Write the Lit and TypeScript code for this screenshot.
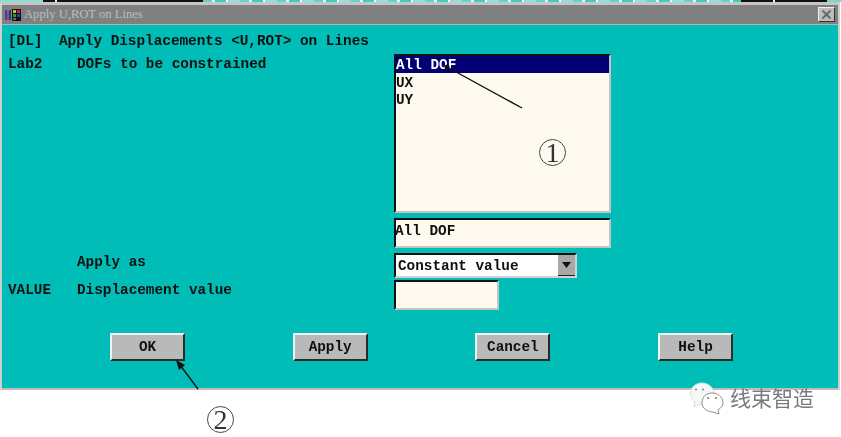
import { LitElement, html, css } from "lit";
import { customElement } from "lit/decorators.js";

@customElement("app-root")
export class AppRoot extends LitElement {
  static styles = css`
    :host {
      display: block;
      position: relative;
      width: 841px;
      height: 437px;
      background: #fff;
      overflow: hidden;
      font-family: "Liberation Mono", monospace;
      font-weight: 700;
      font-size: 14.35px;
      color: #101010;
    }
    .strip { display: flex; height: 2px; }
    .s-teal { width: 43px; background: #8fdcd4; }
    .s-black { background: #111; }
    .s-white { width: 2px; background: #eee; }
    .s-b1 { width: 12px; }
    .s-b2 { width: 146px; }
    .s-b3 { width: 32px; }
    .s-b4 { width: 52px; }
    .s-noise {
      width: 538px;
      background: repeating-linear-gradient(90deg, #5fd6c8 0 9px, #e6f6f2 9px 12px, #3fcdbf 12px 23px, #fff 23px 25px, #8fe2d8 25px 37px);
    }
    .s-end { flex: 1; background: #7cd8cf; }

    .dialog {
      margin: 0 3px 0 2px;
      height: 388px;
      box-sizing: border-box;
      background: #00bdb8;
      border-top: 3px solid #c6c6c6;
      border-bottom: 2px solid #bdbdbd;
      box-shadow: -2px 0 0 #cfcfcf, 2px 0 0 #cfcfcf;
      display: flex;
      flex-direction: column;
      filter: blur(0.3px);
    }
    .title {
      height: 20px;
      margin-bottom: 1px;
      background: #808080;
      border-bottom: 1px solid #b4b4b4;
      box-sizing: border-box;
      display: flex;
      align-items: center;
      padding: 0 3px 0 3px;
      gap: 2px;
      color: #bdbdbd;
      font-family: "Liberation Serif", serif;
      font-weight: 400;
      font-size: 12.6px;
    }
    .title-text { flex: 1; }
    .close {
      width: 17px;
      height: 15px;
      box-sizing: border-box;
      background: #bdbdbd;
      border: 1px solid;
      border-color: #eee #333 #333 #eee;
      display: flex;
    }
    .close svg { width: 100%; height: 100%; }

    .form {
      display: grid;
      grid-template-columns: 69px 317px 1fr;
      padding: 0 0 0 6px;
    }
    .heading {
      grid-column: 1 / -1;
      height: 28px;
      display: grid;
      grid-template-columns: 51px 1fr;
      align-items: center;
      padding-top: 1px;
      box-sizing: border-box;
    }
    .lab { padding-top: 1px; line-height: 19px; }
    .right { display: flex; flex-direction: column; align-items: flex-start; }

    .listbox {
      width: 217px;
      height: 159px;
      box-sizing: border-box;
      background: #fffaf0;
      border: 2px solid;
      border-color: #111 #c4c4c4 #c4c4c4 #111;
    }
    .opt { height: 18px; line-height: 20px; margin-top: -1px; }
    .opt.sel { height: 17px; line-height: 19px; margin: 0 0 1px; background: #000073; color: #fff; }
    .entry {
      width: 217px;
      height: 30px;
      margin-top: 5px;
      box-sizing: border-box;
      background: #fffaf0;
      border: 2px solid;
      border-color: #111 #c4c4c4 #c4c4c4 #111;
      padding: 2px 0 0 0;
      line-height: 18px;
      text-indent: -1px;
    }
    .select {
      width: 183px;
      height: 25px;
      margin-top: 5px;
      box-sizing: border-box;
      background: #fff;
      border: 2px solid;
      border-color: #111 #d2d2d2 #d2d2d2 #111;
      display: flex;
      align-items: center;
      padding-left: 2px;
    }
    .select span { flex: 1; }
    .arrow {
      width: 17px;
      height: 21px;
      background: #a8a8a8;
      border-bottom: 1px solid #222;
      display: flex;
      align-items: center;
      justify-content: center;
      box-sizing: border-box;
    }
    .arrow svg { width: 9px; height: 6px; }
    .value {
      width: 105px;
      height: 30px;
      margin-top: 2px;
      box-sizing: border-box;
      background: #fffaf0;
      border: 2px solid;
      border-color: #111 #c4c4c4 #c4c4c4 #111;
    }
    .apply-label { line-height: 16px; padding-top: 6px; }
    .value-label { line-height: 16px; padding-top: 4px; }
    .buttons {
      display: flex;
      gap: 107.7px;
      padding: 23px 0 0 108px;
    }
    .btn {
      width: 75px;
      height: 28px;
      box-sizing: border-box;
      background: #b9b9b9;
      border: 2px solid;
      border-color: #eef7f5 #2a2a2a #2a2a2a #eef7f5;
      display: flex;
      align-items: center;
      justify-content: center;
    }

    .overlay { position: absolute; left: 0; top: 0; width: 841px; height: 437px; pointer-events: none; }
    .num {
      position: absolute;
      box-sizing: border-box;
      width: 27px;
      height: 27px;
      border: 1px solid #444;
      border-radius: 50%;
      display: flex;
      align-items: center;
      justify-content: center;
      font-family: "Liberation Serif", serif;
      font-weight: 400;
      font-size: 28px;
      line-height: 25px;
      color: #333;
    }
    .n1 { left: 539px; top: 139px; }
    .n2 { left: 207px; top: 406px; }
    .brand {
      position: absolute;
      left: 730px;
      top: 381px;
      font-family: "Noto Sans CJK SC", sans-serif;
      font-weight: 400;
      font-size: 21px;
      line-height: 32px;
      color: #7a7a7a;
    }
    .wechat { position: absolute; left: 690px; top: 382px; width: 36px; height: 34px; }
  `;

  render() {
    const opts = ["All DOF", "UX", "UY"];
    return html`
      <div class="strip">
        <div class="s-teal"></div>
        <div class="s-black s-b1"></div>
        <div class="s-white"></div>
        <div class="s-black s-b2"></div>
        <div class="s-noise"></div>
        <div class="s-black s-b3"></div>
        <div class="s-white"></div>
        <div class="s-black s-b4"></div>
        <div class="s-end"></div>
      </div>
      <div class="dialog">
        <div class="title">
          <svg width="17" height="14" viewBox="0 0 17 14">
            <rect x="0" y="2" width="2" height="10" fill="#3a4a9a" />
            <rect x="2" y="3" width="2" height="9" fill="#a04a6a" />
            <rect x="4" y="2" width="2" height="10" fill="#2a3a8a" />
            <rect x="7" y="1" width="9" height="12" fill="#111" />
            <rect x="8" y="2" width="3" height="3" fill="#d0c020" />
            <rect x="12" y="2" width="3" height="3" fill="#c03020" />
            <rect x="8" y="6" width="3" height="3" fill="#20a040" />
            <rect x="12" y="6" width="3" height="3" fill="#2040c0" />
            <rect x="8" y="10" width="3" height="2" fill="#6a6a6a" />
          </svg>
          <span class="title-text">Apply U,ROT on Lines</span>
          <div class="close">
            <svg viewBox="0 0 15 13"><path d="M3.5 2.5 L11.5 10.5 M11.5 2.5 L3.5 10.5" stroke="#6a6a6a" stroke-width="2" /></svg>
          </div>
        </div>
        <div class="form">
          <div class="heading"><span>[DL]</span><span>Apply Displacements &lt;U,ROT&gt; on Lines</span></div>
          <div class="lab">Lab2</div>
          <div class="lab">DOFs to be constrained</div>
          <div class="right">
            <div class="listbox">
              ${opts.map((o, i) => html`<div class="opt ${i === 0 ? "sel" : ""}">${o}</div>`)}
            </div>
            <div class="entry">All DOF</div>
          </div>
          <div></div>
          <div class="apply-label">Apply as</div>
          <div class="right">
            <div class="select">
              <span>Constant value</span>
              <div class="arrow"><svg viewBox="0 0 9 6"><path d="M0 0 H9 L4.5 6 Z" fill="#111" /></svg></div>
            </div>
          </div>
          <div class="value-label">VALUE</div>
          <div class="value-label">Displacement value</div>
          <div class="right"><div class="value"></div></div>
        </div>
        <div class="buttons">
          <div class="btn">OK</div>
          <div class="btn">Apply</div>
          <div class="btn">Cancel</div>
          <div class="btn">Help</div>
        </div>
      </div>

      <svg class="overlay" viewBox="0 0 841 437">
        <circle cx="447" cy="67" r="2.5" fill="#111" />
        <line x1="447" y1="67" x2="522" y2="108" stroke="#111" stroke-width="1.4" />
        <line x1="198" y1="389" x2="180" y2="365" stroke="#111" stroke-width="1.4" />
        <path d="M176 360 L185 365 L179 370 Z" fill="#111" />
      </svg>
      <span class="num n1">1</span>
      <span class="num n2">2</span>
      <svg class="wechat" viewBox="0 0 36 34">
        <path d="M12 1 C5 1 0 6 0.5 12 C1 16 3 18 5 20 L4 25 L10 22 C12 22.5 14 22.5 16 22 C22 20 24 16 24 12 C24 6 19 1 12 1 Z" fill="#f4f9f8" stroke="#cfdedb" stroke-width="0.9" />
        <path d="M22 11 C16 11 12 15 12 21 C12 26 17 30 23 30 L29 32 L28 28 C31 26 33 24 33 21 C33 15 28 11 22 11 Z" fill="#fff" stroke="#8f8f8f" stroke-width="1" />
        <circle cx="6" cy="7.5" r="0.9" fill="#777" />
        <circle cx="13" cy="7.5" r="0.9" fill="#777" />
        <circle cx="18" cy="16" r="0.9" fill="#666" />
        <circle cx="26" cy="16" r="0.9" fill="#666" />
      </svg>
      <span class="brand">线束智造</span>
    `;
  }
}
